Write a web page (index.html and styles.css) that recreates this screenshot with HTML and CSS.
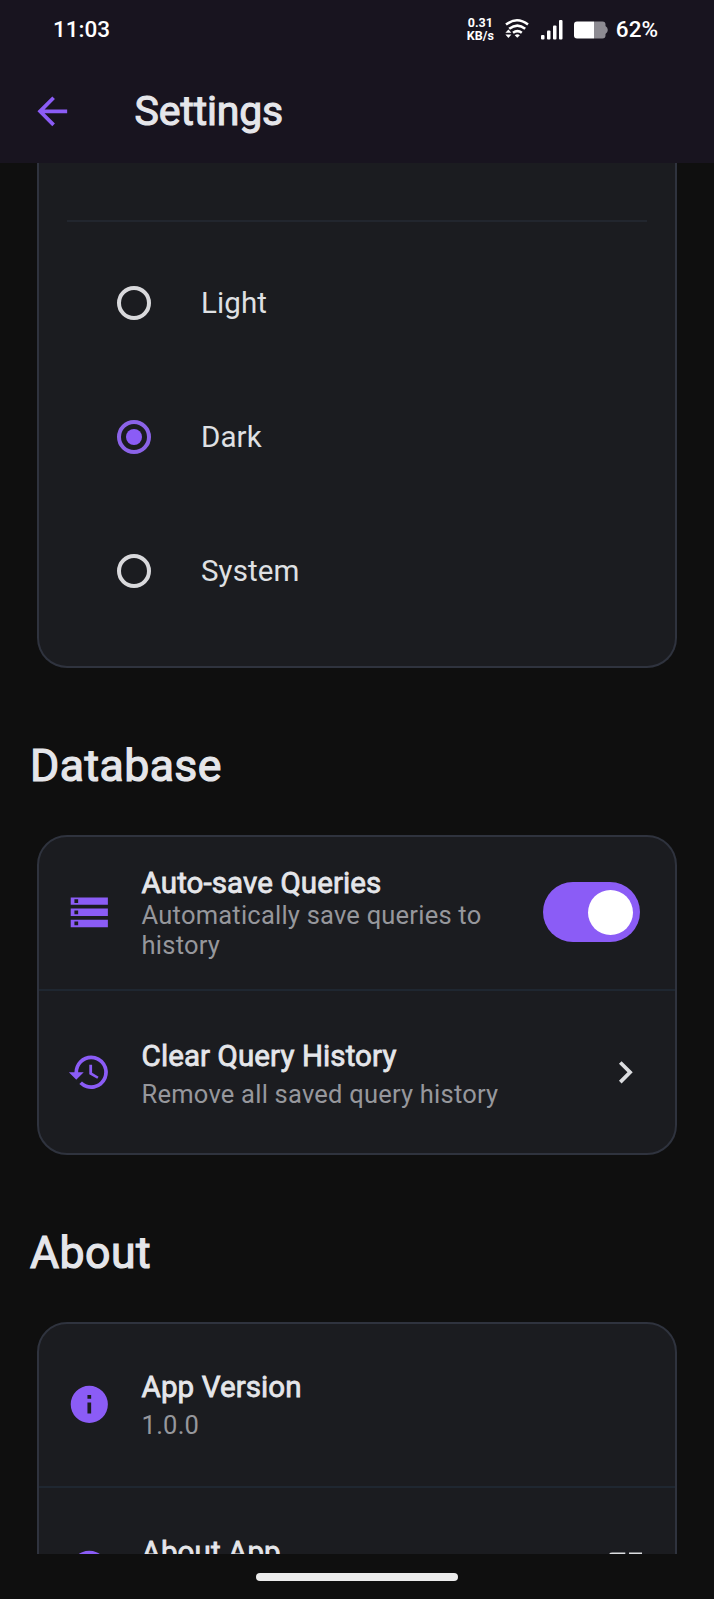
FILE: index.html
```html
<!DOCTYPE html>
<html lang="en">
<head>
<meta charset="utf-8">
<title>Settings</title>
<link rel="stylesheet" href="styles.css">
</head>
<body>
<div class="screen">
  <header class="top">
    <div class="status">
      <span class="clock">11:03</span>
      <div class="indicators">
        <div class="speed"><span>0.31</span><span>KB/s</span></div>
        <svg class="wifi" viewBox="0 0 24 20" fill="none" stroke="#fff" stroke-width="2.5">
          <path d="M1 5.600Q12 -3 23 5.600"/><path d="M4.200 9.800Q12.500 3.400 20.200 9.800"/><path d="M8 13.800Q12.500 10.400 16.800 13.800"/>
          <path d="M12.300 18.800l-2.600-2.600q2.600-1.800 5.200 0z" fill="#fff" stroke="none"/>
          <path d="M3.400 10.400l3 3.400h-6zM3.400 18.900l3-3.400h-6z" fill="#fff" stroke="none"/>
        </svg>
        <svg class="signal" viewBox="0 0 22 20" fill="#fff">
          <rect x="0" y="15" width="3.500" height="4.500" rx="1"/><rect x="6" y="10.500" width="3.500" height="9" rx="1"/><rect x="12" y="5.500" width="3.500" height="14" rx="1"/><rect x="18" y="0" width="3.500" height="19.500" rx="1"/>
        </svg>
        <svg class="battery" viewBox="0 0 34 18">
          <path d="M20 0.500h8.500q3 0 3 3v1.500q2.300 1.500 2.300 4t-2.300 4v1.500q0 3-3 3H20z" fill="#8d8b92"/>
          <path d="M3 0.500h17v17H3q-3 0-3-3v-11q0-3 3-3z" fill="#fff"/>
        </svg>
        <span class="percent">62%</span>
      </div>
    </div>
    <div class="appbar">
      <svg class="icon back" viewBox="0 0 24 24"><path d="M20 11H7.830l5.590-5.590L12 4l-8 8 8 8 1.410-1.410L7.830 13H20v-2z"/></svg>
      <h1 class="title">Settings</h1>
    </div>
  </header>

  <main class="scroll">
    <section class="card card-theme">
      <div class="theme-head"></div>
      <label class="option"><span class="radio"></span><span>Light</span></label>
      <label class="option"><span class="radio radio-on"></span><span>Dark</span></label>
      <label class="option"><span class="radio"></span><span>System</span></label>
    </section>

    <h2 class="heading">Database</h2>
    <section class="card">
      <div class="row row-switch">
        <svg class="icon" viewBox="0 0 24 24"><path d="M2 20h20v-4H2v4zm2-3h2v2H4v-2zM2 4v4h20V4H2zm4 3H4V5h2v2zm-4 7h20v-4H2v4zm2-3h2v2H4v-2z"/></svg>
        <div class="text"><div class="name">Auto-save Queries</div><div class="sub">Automatically save queries to history</div></div>
        <span class="switch"><span class="thumb"></span></span>
      </div>
      <div class="row row-history">
        <svg class="icon" viewBox="0 0 24 24"><path d="M13 3a9 9 0 0 0-9 9H1l3.890 3.890.070.140L9 12H6a7 7 0 1 1 7 7c-1.930 0-3.680-.790-4.940-2.060l-1.420 1.420A9 9 0 1 0 13 3zm-1 5v5l4.280 2.540.720-1.210-3.500-2.080V8z"/></svg>
        <div class="text"><div class="name">Clear Query History</div><div class="sub">Remove all saved query history</div></div>
        <svg class="icon trail" viewBox="0 0 24 24"><path d="M10 6 8.590 7.410 13.170 12l-4.580 4.590L10 18l6-6z"/></svg>
      </div>
    </section>

    <h2 class="heading">About</h2>
    <section class="card">
      <div class="row row-version">
        <svg class="icon" viewBox="0 0 24 24"><path d="M12 2a10 10 0 1 0 0 20 10 10 0 0 0 0-20zm1 15h-2v-6h2v6zm0-8h-2V7h2v2z"/></svg>
        <div class="text"><div class="name">App Version</div><div class="sub">1.0.0</div></div>
      </div>
      <div class="row row-about">
        <svg class="icon" viewBox="0 0 24 24"><path d="M12 2a10 10 0 1 0 0 20 10 10 0 0 0 0-20zm1 17h-2v-2h2v2zm0-4h-2c0-3 3-3 3-5a2 2 0 0 0-4 0H8a4 4 0 0 1 8 0c0 2.500-3 2.750-3 5z"/></svg>
        <div class="text"><div class="name">About App</div></div>
        <svg class="icon trail" viewBox="0 0 24 24"><path d="M19 19H5V5h7V3H5a2 2 0 0 0-2 2v14a2 2 0 0 0 2 2h14a2 2 0 0 0 2-2v-7h-2v7zM14 3v2h3.590l-9.830 9.830 1.410 1.410L19 6.410V10h2V3h-7z"/></svg>
      </div>
    </section>
  </main>
  <footer class="nav"><div class="pill"></div></footer>
</div>
</body>
</html>
```
FILE: styles.css
```css
* { box-sizing: border-box; }
body { margin: 0; background: #0f0f0f; font-family: Roboto, "Liberation Sans", sans-serif; color: #e5e6ea; }
.screen { width: 714px; height: 1599px; display: flex; flex-direction: column; overflow: hidden; }

.top { flex: none; height: 163px; background: #18141f; }
.status { height: 60px; padding: 0 56px 0 53px; display: flex; align-items: center; justify-content: space-between; color: #fff; font-weight: 500; font-size: 22.500px; }
.clock { margin-top: -2px; }
.indicators { display: flex; align-items: center; }
.speed { display: flex; flex-direction: column; align-items: center; font-size: 12.500px; line-height: 13px; font-weight: 700; margin-top: -3px; }
.wifi { width: 24px; height: 20px; margin-left: 11px; margin-top: -2px; }
.signal { width: 22px; height: 20px; margin-left: 12px; margin-top: -1px; }
.battery { width: 34px; height: 18px; margin-left: 11px; }
.percent { margin-left: 8px; margin-top: -2px; }
.appbar { height: 103px; padding: 0 30px 0 30px; display: flex; align-items: center; }
.title { margin: -2px 0 0 60px; font-size: 41px; font-weight: 400; line-height: 50px; letter-spacing: -0.150px; -webkit-text-stroke: 1.100px; }

.icon { flex: none; width: 44.600px; height: 44.600px; fill: #8b5cf6; }
.trail { fill: #dcdde0; }

.scroll { flex: none; height: 1391px; overflow: hidden; padding: 0 37px; }
.card { background: #1b1c20; border: 2px solid #2f333e; border-radius: 30px; }
.card-theme { border-top: 0; border-radius: 0 0 30px 30px; height: 505px; padding: 0 28px; }
.theme-head { height: 59px; border-bottom: 2px solid #22262e; margin-bottom: 14px; }
.option { height: 134px; padding-left: 50px; display: flex; align-items: center; gap: 50px; font-size: 29.500px; letter-spacing: 0.100px; color: #dfe0e3; }
.radio { width: 34px; height: 34px; border: 4px solid #d9d9dc; border-radius: 50%; display: flex; align-items: center; justify-content: center; }
.radio-on { border-color: #8b63e8; }
.radio-on::before { content: ""; width: 16px; height: 16px; border-radius: 50%; background: #8b5cf6; }

.heading { margin: 0 0 0 -7px; height: 167px; line-height: 197px; font-size: 44.600px; font-weight: 400; letter-spacing: 0.450px; -webkit-text-stroke: 1.200px; }
.row { height: 162px; padding: 0 27px 0 28px; display: flex; align-items: center; }
.row + .row { height: 164px; border-top: 2px solid #1f2731; }
.row-switch { height: 152px; padding: 0 35px 2px 28px; }
.text { flex: 1; margin-left: 30px; }
.name { font-size: 29.500px; line-height: 36px; letter-spacing: 0.100px; -webkit-text-stroke: 0.800px; }
.sub { font-size: 25.500px; line-height: 40px; letter-spacing: 0.220px; color: #96979c; }
.row-history { padding-top: 1px; }
.row-history .text { padding-top: 6px; }
.row-switch .text { padding-top: 2px; }
.row-switch .name { line-height: 34px; }
.row-switch .sub { line-height: 30px; }
.row-version { padding-bottom: 2px; }
.row-version .text { padding-top: 6px; }
.row-about .text { padding-bottom: 35px; }
.switch { flex: none; width: 97px; height: 60px; border-radius: 30px; background: #8b5cf6; display: flex; align-items: center; justify-content: flex-end; padding-right: 7px; }
.thumb { width: 45px; height: 45px; border-radius: 50%; background: #fff; }

.nav { height: 45px; display: flex; justify-content: center; padding-top: 19px; }
.pill { width: 202px; height: 8px; border-radius: 4px; background: #ececec; }
```
